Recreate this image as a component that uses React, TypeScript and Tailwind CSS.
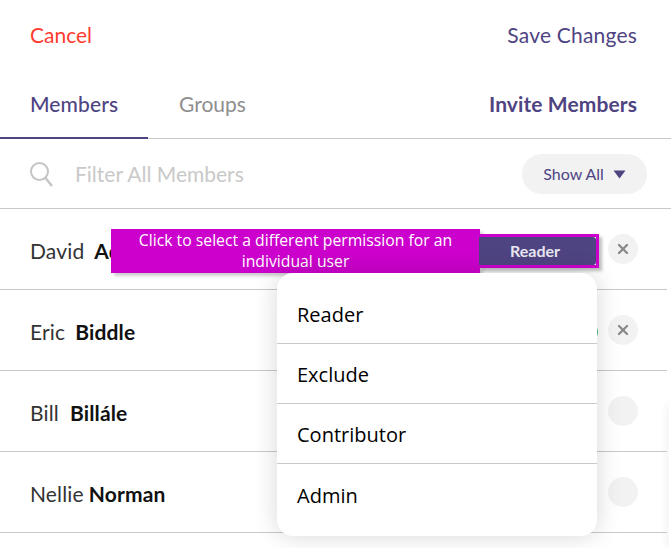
import { X } from "lucide-react";

const members = [
  { first: "David", last: "Adams", gap: "ml-[10px]", remove: true },
  { first: "Eric", last: "Biddle", gap: "ml-[10px]", remove: true },
  { first: "Bill", last: "Billále", gap: "ml-[11px]", remove: false },
  { first: "Nellie", last: "Norman", gap: "ml-[5px]", remove: false },
];

const permissions = ["Reader", "Exclude", "Contributor", "Admin"];

export default function App() {
  return (
    <div className="relative h-[548px] w-[671px] overflow-hidden bg-white font-['Lato',sans-serif]">
      {/* header */}
      <div className="flex h-[69px] items-center justify-between pl-[30px] pr-[34px] text-[21px] leading-none">
        <span className="text-[#ff3b30]">Cancel</span>
        <span className="tracking-[0.2px] text-[#4f4482]">Save Changes</span>
      </div>

      {/* tabs */}
      <div className="flex h-[70px] items-stretch justify-between border-b border-[#c8c8c8] pr-[34px] text-[21px]">
        <div className="flex">
          <div className="-mb-px flex w-[148px] items-center border-b-2 border-[#4f4482] pl-[30px] pt-[2px] font-medium tracking-[0.1px] text-[#4f4482]">
            <span>Members</span>
          </div>
          <div className="flex items-center pl-[31px] text-[#8e8e8e]">
            <span>Groups</span>
          </div>
        </div>
        <div className="flex items-center font-bold tracking-[0.1px] text-[#4f4482]">
          <span>Invite Members</span>
        </div>
      </div>

      {/* filter */}
      <div className="flex h-[70px] items-center justify-between border-b border-[#c8c8c8] pl-[29px] pr-6">
        <div className="flex items-center">
          <svg width="25" height="27" viewBox="0 0 25 27" fill="none" stroke="#c4c4c4" strokeWidth="2" className="mt-0.5">
            <circle cx="10.5" cy="10.5" r="8.5" />
            <path d="M16.5 17L23 25" strokeWidth="2.5" />
          </svg>
          <span className="ml-[21px] text-[21px] text-[#c9c9c9]">Filter All Members</span>
        </div>
        <div className="flex h-10 w-[125px] items-center justify-center gap-[9px] rounded-full bg-[#f2f2f2] text-[16px] text-[#4f4482]">
          <span>Show All</span>
          <svg width="13" height="9" viewBox="0 0 13 9" className="mt-px">
            <path d="M0.5 0.5h12L6.5 8.5z" fill="#4f4482" />
          </svg>
        </div>
      </div>

      {/* member rows */}
      {members.map((m) => (
        <div
          key={m.first}
          className="mr-1 flex h-[81px] items-center justify-between border-b border-[#c8c8c8] pl-[30px] pr-[29px] text-[21px] tracking-[0.15px] text-[#111111]"
        >
          <div className="mt-[3px]">
            <span className="text-[#333333]">{m.first}</span>
            <span className={`${m.gap} font-bold`}>{m.last}</span>
          </div>
          <div className="flex h-[30px] w-[30px] items-center justify-center rounded-full bg-[#f2f2f2]">
            {m.remove && <X className="h-4 w-4 text-[#8a8a8a]" strokeWidth={3.5} />}
          </div>
        </div>
      ))}

      {/* status dot behind the dropdown */}
      <div className="absolute left-[582px] top-[324px] h-4 w-4 rounded-full bg-[#3cb371]" />

      {/* callout */}
      <div className="absolute left-[111px] top-[229px] flex h-[44px] w-[369px] items-center justify-center bg-[#cc00cc] px-5 text-center font-['Open_Sans',sans-serif] text-[15.75px] leading-[21px] text-white shadow-[3px_3px_3px_rgba(0,0,0,0.2)]">
        Click to select a different permission for an individual user
      </div>

      {/* reader button */}
      <div className="absolute left-[479px] top-[234px] h-[34px] w-[120px] border-[3px] border-l-0 border-[#cc00cc] bg-white shadow-[3px_3px_3px_rgba(0,0,0,0.25)]">
        <div className="flex h-full items-center justify-center rounded-r-[3px] bg-[#4f4482] pr-[5px] text-[16px] font-bold text-[#e8e6f0]">
          Reader
        </div>
      </div>

      {/* dropdown */}
      <div className="absolute left-[277px] top-[273px] flex h-[263px] w-[320px] flex-col rounded-2xl bg-white font-['Open_Sans',sans-serif] text-[20px] text-black shadow-[0_0_24px_rgba(0,0,0,0.16)]">
        {permissions.map((p, i) => (
          <div
            key={p}
            className={`flex h-[60px] items-center pl-5 ${i === 0 ? "mt-[11px]" : ""} ${i < 3 ? "border-b border-[#c8c8c8] pt-0.5" : "pt-1"}`}
          >
            {p}
          </div>
        ))}
      </div>

      {/* neighbouring panel edge */}
      <div className="absolute left-[669px] top-[405px] h-[143px] w-[2px] bg-white shadow-[0_0_10px_rgba(0,0,0,0.2)]" />
    </div>
  );
}
